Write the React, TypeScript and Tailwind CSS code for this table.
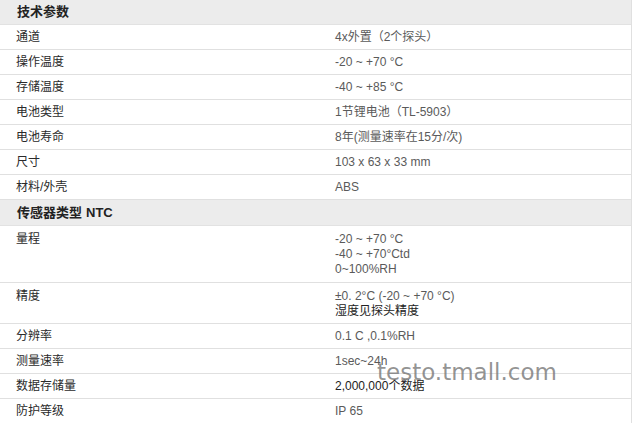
const font = {
  fontFamily: '"Liberation Sans", Arial, "Noto Sans CJK SC", sans-serif',
};

type Row = {
  label: string;
  values: { text: string; dark?: boolean }[];
  h: string;
};

const section1: Row[] = [
  { label: "通道", values: [{ text: "4x外置（2个探头）" }], h: "h-[25px]" },
  { label: "操作温度", values: [{ text: "-20 ~ +70 °C" }], h: "h-[25px]" },
  { label: "存储温度", values: [{ text: "-40 ~ +85 °C" }], h: "h-[25px]" },
  { label: "电池类型", values: [{ text: "1节锂电池（TL-5903）" }], h: "h-[25px]" },
  { label: "电池寿命", values: [{ text: "8年(测量速率在15分/次)" }], h: "h-[25px]" },
  { label: "尺寸", values: [{ text: "103 x 63 x 33 mm" }], h: "h-[25px]" },
  { label: "材料/外壳", values: [{ text: "ABS" }], h: "h-[25px]" },
];

const section2: Row[] = [
  {
    label: "量程",
    values: [
      { text: "-20 ~ +70 °C" },
      { text: "-40 ~ +70°Ctd" },
      { text: "0~100%RH" },
    ],
    h: "h-[57px]",
  },
  {
    label: "精度",
    values: [{ text: "±0. 2°C (-20 ~ +70 °C)" }, { text: "湿度见探头精度", dark: true }],
    h: "h-[41px]",
  },
  { label: "分辨率", values: [{ text: "0.1 C ,0.1%RH" }], h: "h-[25px]" },
  { label: "测量速率", values: [{ text: "1sec~24h" }], h: "h-[25px]" },
  { label: "数据存储量", values: [{ text: "2,000,000个数据", dark: true }], h: "h-[25px]" },
  { label: "防护等级", values: [{ text: "IP 65" }], h: "h-[25px]" },
];

function Header({ title }: { title: string }) {
  return (
    <div className="h-[25px] flex items-center bg-[#ececec] border-b border-[#e2e2e2] pl-[17px] text-[13px] font-bold text-[#222]">
      {title}
    </div>
  );
}

function SpecRow({ row }: { row: Row }) {
  const multi = row.values.length > 1;
  return (
    <div
      className={`${row.h} flex border-b border-[#e0e0e0] bg-white ${
        multi ? "items-start pt-[6px]" : "items-center"
      }`}
    >
      <div className="w-[319px] pl-[16px] text-[12px] leading-[15px] text-[#2a2a2a]">
        {row.label}
      </div>
      <div className="flex flex-col pl-[16px] text-[12px] leading-[15px]">
        {row.values.map((v, i) => (
          <span key={i} className={v.dark ? "text-[#222]" : "text-[#5a5a5a]"}>
            {v.text}
          </span>
        ))}
      </div>
    </div>
  );
}

export default function App() {
  return (
    <div className="relative w-[633px] h-[423px] overflow-hidden bg-white" style={font}>
      <div className="w-[632px] border-r border-[#e0e0e0]">
        <Header title="技术参数" />
        {section1.map((r) => (
          <SpecRow key={r.label} row={r} />
        ))}
        <div className="h-[26px] flex items-center bg-[#ececec] border-b border-[#e2e2e2] pl-[17px] text-[13px] text-[#222]">
          <span className="font-bold">传感器类型</span>
          <span className="ml-[4px] font-bold">NTC</span>
        </div>
        {section2.map((r) => (
          <SpecRow key={r.label} row={r} />
        ))}
      </div>
      <div
        className="absolute left-[377px] top-[357px] text-[23px] leading-[30px] text-[#777]/80"
        style={{ fontFamily: '"DejaVu Sans", Verdana, sans-serif' }}
      >
        testo.tmall.com
      </div>
    </div>
  );
}
